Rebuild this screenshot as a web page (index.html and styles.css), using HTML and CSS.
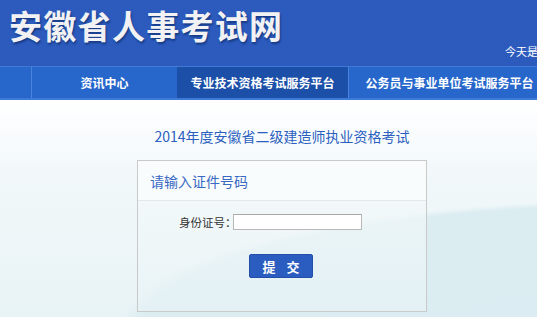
FILE: index.html
```html
<!DOCTYPE html>
<html lang="zh-CN">
<head>
<meta charset="utf-8">
<title>安徽省人事考试网</title>
<link rel="stylesheet" href="styles.css">
</head>
<body>
<div class="page">
  <header class="top">
    <h1 class="logo">安徽省人事考试网</h1>
    <div class="today">今天是</div>
  </header>
  <nav class="nav">
    <span class="nav-blank"></span>
    <a class="nav-item w1">资讯中心</a>
    <a class="nav-item w2 active">专业技术资格考试服务平台</a>
    <a class="nav-item w3">公务员与事业单位考试服务平台</a>
  </nav>
  <main class="main">
    <div class="col">
      <h2 class="exam-title">2014年度安徽省二级建造师执业资格考试</h2>
      <div class="box">
        <div class="box-head">请输入证件号码</div>
        <div class="box-body">
          <div class="row">
            <label class="lbl">身份证号：</label>
            <input class="inp" type="text">
          </div>
          <div class="btn-row">
            <button class="btn">提 交</button>
          </div>
        </div>
      </div>
    </div>
  </main>
</div>
</body>
</html>
```
FILE: styles.css
```css
html, body {
  margin: 0;
  padding: 0;
  overflow: hidden;
}
body {
  width: 537px;
  height: 317px;
  font-family: "Noto Sans CJK SC", "Noto Sans", sans-serif;
}
.page {
  width: 537px;
  height: 317px;
  overflow: hidden;
  background:
    radial-gradient(ellipse 520px 130px at 640px 330px, #dbedf2 0%, #dcedf2 96%, rgba(220,237,242,0) 100%),
    linear-gradient(180deg, #ffffff 0px, #ffffff 100px, #f2f8fa 170px, #e8f3f6 317px);
}
.top {
  height: 66px;
  background: #2c5bbd;
  position: relative;
  display: flex;
  align-items: flex-start;
}
.logo {
  margin: 4px 0 0 9px;
  font-size: 33px;
  line-height: 42px;
  letter-spacing: 1.3px;
  font-weight: 700;
  color: #f2f2f4;
  text-shadow: 1px 2px 2px #173b86;
  white-space: nowrap;
}
.today {
  position: absolute;
  left: 505px;
  top: 44px;
  font-size: 11px;
  line-height: 14px;
  color: #ffffff;
  white-space: nowrap;
}
.nav {
  display: flex;
  height: 31px;
  background: #2767cc;
  border-top: 1px solid #3f7ad6;
  border-bottom: 2px solid #3d7bd8;
  white-space: nowrap;
}
.nav-blank {
  flex: 0 0 31px;
  border-right: 1px solid #4a84dc;
}
.nav-item {
  display: flex;
  align-items: center;
  justify-content: center;
  font-size: 12px;
  font-weight: 700;
  color: #ffffff;
  flex-shrink: 0;
}
.w1 { width: 145px; }
.w2 { width: 171px; }
.w3 { width: 199px; padding-left: 1px; border-left: 1px solid #4a84dc; }
.active { background: #1b4fa8; }
.main {
  padding-top: 28px;
}
.col {
  width: 290px;
  margin-left: 137px;
  display: flex;
  flex-direction: column;
}
.exam-title {
  margin: 0 0 16px 0;
  font-size: 14px;
  line-height: 16px;
  font-weight: 400;
  color: #2b5fbf;
  text-align: center;
  white-space: nowrap;
}
.box {
  border: 1px solid #c9c9c9;
  height: 152px;
  box-sizing: border-box;
  background: linear-gradient(180deg, rgba(246,250,251,0.7), rgba(232,243,246,0.6));
}
.box-head {
  height: 39px;
  border-bottom: 1px solid #e2e9ec;
  padding-left: 12px;
  display: flex;
  align-items: center;
  font-size: 14px;
  color: #3a69c4;
  background: rgba(250,252,253,0.8);
}
.box-body {
  display: flex;
  flex-direction: column;
  padding-top: 12px;
}
.row {
  display: flex;
  align-items: center;
  padding-left: 41px;
  height: 17px;
}
.lbl {
  font-size: 11.5px;
  line-height: 16px;
  color: #333333;
  flex: 0 0 54px;
  width: 54px;
  white-space: nowrap;
  overflow: visible;
}
.inp {
  width: 129px;
  height: 16px;
  box-sizing: border-box;
  border: 1px solid #b8b8b8;
  border-top-color: #a8a8a8;
  background: #ffffff;
  padding: 0;
  margin: 0;
}
.btn-row {
  display: flex;
  padding-left: 111px;
  padding-top: 24px;
}
.btn {
  width: 64px;
  height: 24px;
  background: #2b5cc0;
  border: 1px solid #244fa8;
  border-radius: 2px;
  color: #ffffff;
  font-family: "Noto Sans CJK SC", sans-serif;
  font-size: 13px;
  font-weight: 700;
  letter-spacing: 4px;
  padding: 0 0 0 4px;
  margin: 0;
}
```
